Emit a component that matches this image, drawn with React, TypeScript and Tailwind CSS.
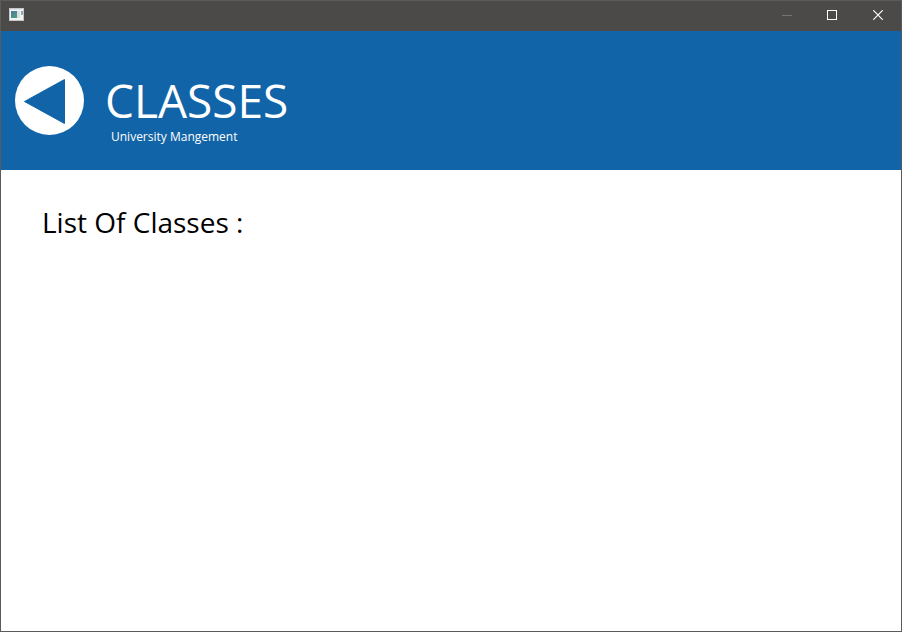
function AppIcon() {
  return (
    <svg width="16" height="14" viewBox="0 0 16 14" aria-hidden="true">
      <defs>
        <linearGradient id="pane" x1="0" y1="0" x2="1" y2="1">
          <stop offset="0" stopColor="#5472a0" />
          <stop offset="1" stopColor="#4ba67c" />
        </linearGradient>
      </defs>
      <rect x="0.5" y="0.5" width="14" height="12" fill="#f4f4f4" stroke="#c3c7ca" />
      <rect x="1" y="1" width="12" height="1" fill="#dfe5ea" />
      <rect x="2" y="3" width="6" height="7" fill="url(#pane)" />
      <rect x="8" y="3" width="3" height="7" fill="#dedede" />
      <rect x="12" y="3" width="2" height="3" fill="#8ba3c8" />
      <rect x="12" y="6" width="2" height="1" fill="#8fc3a4" />
    </svg>
  );
}

function TitleBar() {
  return (
    <div className="flex h-[30px] justify-between bg-[#4c4a48] pb-0.5">
      <div className="flex items-center pl-2">
        <AppIcon />
      </div>
      <div className="flex">
        <button type="button" aria-label="Minimize" disabled className="flex w-11 items-center justify-center">
          <svg width="10" height="10" viewBox="0 0 10 10">
            <rect y="5" width="10" height="1" fill="#767573" />
          </svg>
        </button>
        <button type="button" aria-label="Maximize" className="flex w-[46px] items-center justify-center">
          <svg width="10" height="10" viewBox="0 0 10 10">
            <rect x="0.5" y="0.5" width="9" height="9" fill="none" stroke="#fff" />
          </svg>
        </button>
        <button type="button" aria-label="Close" className="flex w-[46px] items-center justify-center">
          <svg width="10" height="10" viewBox="0 0 10 10">
            <path d="M0.3 0.3 9.7 9.7M9.7 0.3 0.3 9.7" stroke="#fff" strokeWidth="1.2" />
          </svg>
        </button>
      </div>
    </div>
  );
}

export default function App() {
  return (
    <div className="min-h-screen bg-white pb-0.5 font-['Segoe_UI','Open_Sans','Noto_Sans',sans-serif]">
      <div className="flex min-h-[calc(100vh-2px)] flex-col border border-[#5b5b5b] bg-white">
        <TitleBar />
        <header className="flex h-[139px] items-center gap-[21px] bg-[#1164a7] pl-3.5 text-white">
          <button type="button" aria-label="Back">
            <svg width="69" height="69" viewBox="0 0 69 69">
              <circle cx="34.5" cy="34.5" r="34.5" fill="#fff" />
              <path d="M9.5 35.5 49.5 13.5V57.5Z" fill="#1164a7" stroke="#1164a7" strokeWidth="1" strokeLinejoin="round" />
            </svg>
          </button>
          <div className="flex flex-col pt-4">
            <h1 className="text-[46px] leading-[56px] font-normal">CLASSES</h1>
            <p className="pl-1.5 text-[12px] leading-[18px]">University Mangement</p>
          </div>
        </header>
        <main className="flex-1 px-[41px] py-8">
          <h2 className="text-[28px] leading-10 text-black">List Of Classes :</h2>
        </main>
      </div>
    </div>
  );
}
